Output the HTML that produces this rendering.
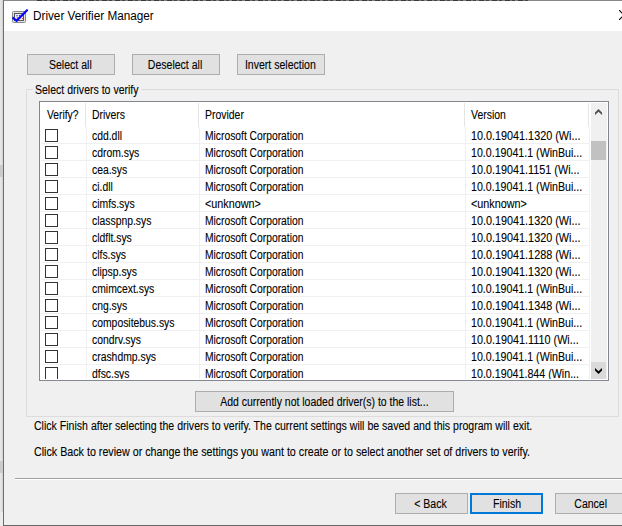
<!DOCTYPE html>
<html><head><meta charset="utf-8">
<style>
html,body{margin:0;padding:0;}
html{overflow:hidden;}
body{width:622px;height:526px;overflow:hidden;background:linear-gradient(to right,#e5e5e5 0,#e5e5e5 1px,#e1e1e1 1px,#e1e1e1 2px,#d6d6d6 2px,#d6d6d6 3px,#f0f0f0 3px);position:relative;font-family:"Liberation Sans",sans-serif;font-size:12px;color:#000;-webkit-text-stroke:0.1px #000;}
.abs{position:absolute;}
#win{left:3px;top:0;width:640px;height:526px;background:#f0f0f0;border-left:1px solid #6c6c6c;border-top:1px solid #888;border-bottom:1px solid #666;box-sizing:border-box;}
#title{left:4px;top:1px;width:640px;height:30px;background:#fff;}
#ttext{left:33.3px;top:8.3px;font-size:12.3px;line-height:16px;white-space:nowrap;-webkit-text-stroke:0;transform:scaleX(.955);transform-origin:0 50%;}
.btn{box-sizing:border-box;border:1px solid #adadad;background:#e1e1e1;height:21px;text-align:center;line-height:20px;white-space:nowrap;}
.btn span{display:inline-block;position:relative;left:-.5px;transform:scaleX(.878);transform-origin:50% 50%;}
.t{white-space:nowrap;line-height:14px;transform:scaleX(.87);transform-origin:0 50%;}
#lv{left:39px;top:101px;width:570px;height:280px;box-sizing:border-box;border:1px solid #828790;background:#fff;overflow:hidden;}
#lvi{position:absolute;left:1px;top:1px;width:566px;height:276px;overflow:hidden;}
.row{position:absolute;left:0;width:549px;height:17px;border-bottom:1px solid #f0f0f0;box-sizing:border-box;}
.row span{position:absolute;top:2.2px;line-height:14px;white-space:nowrap;transform:scaleX(.865);transform-origin:0 50%;}
.c1{left:50.5px} .c2{left:164.3px} .c3{left:430.3px}
.row .c2{transform:scaleX(.858)}
.cb{position:absolute;left:4px;top:2px;width:13px;height:13px;box-sizing:border-box;border:1px solid #333;background:#fff;}
.vs{position:absolute;top:24px;width:1px;height:260px;background:#f0f0f0;}
.hs{position:absolute;top:0;width:1px;height:24px;background:#e5e5e5;}
</style></head><body>
<div class="abs" style="left:0;top:165px;width:3px;height:12px;background:#cbcbcb;"></div>
<div class="abs" style="left:0;top:461px;width:3px;height:12px;background:#cbcbcb;"></div>
<div class="abs" style="left:0;top:512px;width:3px;height:14px;background:#ececec;"></div>
<div id="win" class="abs"></div>
<div class="abs" style="left:37px;top:0;width:491px;height:1px;background:repeating-linear-gradient(to right,#3a3a3a 0,#3a3a3a 5px,#777 5px,#777 7px,#444 7px,#444 10px,#808080 10px,#808080 13px);"></div>
<div id="title" class="abs"></div>
<svg class="abs" style="left:10px;top:7px" width="20" height="18" viewBox="0 0 20 18">
<rect x="2.5" y="4.5" width="13" height="11" rx="1" fill="#e2e2e2" stroke="#8a8a8a" />
<rect x="4.5" y="6.500" width="9" height="7" fill="#ececf0" stroke="#555"/>
<circle cx="7" cy="8.8" r=".7" fill="#22f"/><circle cx="9.5" cy="8.6" r=".7" fill="#22f"/>
<circle cx="7.5" cy="11" r="1" fill="#f66"/><circle cx="12.5" cy="11.5" r=".6" fill="#e22"/>
<path d="M2.900 9.500 L6.500 12.200 L17.100 1.700 L18.300 3.400 L6.700 15.300 L2 11.600 Z" fill="#0505fa"/>
</svg>
<div id="ttext" class="abs">Driver Verifier Manager</div>
<svg class="abs" style="left:619px;top:10px" width="10" height="10" viewBox="0 0 10 10"><path d="M0 0 L10 10 M10 0 L0 10" stroke="#000" stroke-width="1.100" fill="none"/></svg>

<div class="abs btn" style="left:27px;top:54px;width:88px;"><span>Select all</span></div>
<div class="abs btn" style="left:132px;top:54px;width:88px;"><span>Deselect all</span></div>
<div class="abs btn" style="left:237px;top:54px;width:88px;"><span>Invert selection</span></div>

<div class="abs" style="left:26px;top:89px;width:593px;height:328px;box-sizing:border-box;border:1px solid #dcdcdc;"></div>
<div class="abs" style="left:33px;top:83px;width:108px;height:14px;background:#f0f0f0;"></div>
<div class="abs t" style="left:35px;top:83px;transform:scaleX(.877)">Select drivers to verify</div>

<div id="lv" class="abs"><div id="lvi">
<div class="abs t" style="left:6px;top:5px;transform:scaleX(.858)">Verify?</div>
<div class="abs t" style="left:51px;top:5px;">Drivers</div>
<div class="abs t" style="left:163.7px;top:5px;">Provider</div>
<div class="abs t" style="left:430.2px;top:5px;">Version</div>
<div class="hs" style="left:44px;"></div><div class="vs" style="left:45px;"></div>
<div class="hs" style="left:157px;"></div><div class="vs" style="left:158px;"></div>
<div class="hs" style="left:423px;"></div><div class="vs" style="left:424px;"></div>
<div class="hs" style="left:547px;"></div><div class="vs" style="left:548px;"></div>
<div id="rows">
<div class="row" style="top:24px"><i class="cb"></i><span class="c1">cdd.dll</span><span class="c2">Microsoft Corporation</span><span class="c3" style="transform:scaleX(0.901)">10.0.19041.1320 (Wi...</span></div>
<div class="row" style="top:41px"><i class="cb"></i><span class="c1">cdrom.sys</span><span class="c2">Microsoft Corporation</span><span class="c3" style="transform:scaleX(0.887)">10.0.19041.1 (WinBui...</span></div>
<div class="row" style="top:58px"><i class="cb"></i><span class="c1">cea.sys</span><span class="c2">Microsoft Corporation</span><span class="c3" style="transform:scaleX(0.901)">10.0.19041.1151 (Wi...</span></div>
<div class="row" style="top:75px"><i class="cb"></i><span class="c1">ci.dll</span><span class="c2">Microsoft Corporation</span><span class="c3" style="transform:scaleX(0.887)">10.0.19041.1 (WinBui...</span></div>
<div class="row" style="top:92px"><i class="cb"></i><span class="c1">cimfs.sys</span><span class="c2" style="transform:scaleX(.898)">&lt;unknown&gt;</span><span class="c3" style="transform:scaleX(0.898)">&lt;unknown&gt;</span></div>
<div class="row" style="top:109px"><i class="cb"></i><span class="c1">classpnp.sys</span><span class="c2">Microsoft Corporation</span><span class="c3" style="transform:scaleX(0.901)">10.0.19041.1320 (Wi...</span></div>
<div class="row" style="top:126px"><i class="cb"></i><span class="c1">cldflt.sys</span><span class="c2">Microsoft Corporation</span><span class="c3" style="transform:scaleX(0.901)">10.0.19041.1320 (Wi...</span></div>
<div class="row" style="top:143px"><i class="cb"></i><span class="c1">clfs.sys</span><span class="c2">Microsoft Corporation</span><span class="c3" style="transform:scaleX(0.901)">10.0.19041.1288 (Wi...</span></div>
<div class="row" style="top:160px"><i class="cb"></i><span class="c1">clipsp.sys</span><span class="c2">Microsoft Corporation</span><span class="c3" style="transform:scaleX(0.901)">10.0.19041.1320 (Wi...</span></div>
<div class="row" style="top:177px"><i class="cb"></i><span class="c1">cmimcext.sys</span><span class="c2">Microsoft Corporation</span><span class="c3" style="transform:scaleX(0.887)">10.0.19041.1 (WinBui...</span></div>
<div class="row" style="top:194px"><i class="cb"></i><span class="c1">cng.sys</span><span class="c2">Microsoft Corporation</span><span class="c3" style="transform:scaleX(0.901)">10.0.19041.1348 (Wi...</span></div>
<div class="row" style="top:211px"><i class="cb"></i><span class="c1">compositebus.sys</span><span class="c2">Microsoft Corporation</span><span class="c3" style="transform:scaleX(0.887)">10.0.19041.1 (WinBui...</span></div>
<div class="row" style="top:228px"><i class="cb"></i><span class="c1">condrv.sys</span><span class="c2">Microsoft Corporation</span><span class="c3" style="transform:scaleX(0.901)">10.0.19041.1110 (Wi...</span></div>
<div class="row" style="top:245px"><i class="cb"></i><span class="c1">crashdmp.sys</span><span class="c2">Microsoft Corporation</span><span class="c3" style="transform:scaleX(0.887)">10.0.19041.1 (WinBui...</span></div>
<div class="row" style="top:262px"><i class="cb"></i><span class="c1">dfsc.sys</span><span class="c2">Microsoft Corporation</span><span class="c3" style="transform:scaleX(0.89)">10.0.19041.844 (Win...</span></div>
</div>
<div class="abs" style="left:549px;top:0;width:20px;height:276px;background:#fff;"></div>
<div class="abs" style="left:550px;top:0;width:16px;height:276px;background:#f0f0f0;"></div>
<div class="abs" style="left:550px;top:38px;width:15px;height:19px;background:#c1c1c1;"></div>
<div class="abs" style="left:550px;top:259px;width:15px;height:17px;background:#dadada;"></div>
<svg class="abs" style="left:550px;top:0" width="16" height="276" viewBox="0 0 16 276">
<path d="M4 12 L7.500 8.700 L11 12 L11 9.400 L7.500 6 L4 9.400 Z" fill="#505050"/>
<path d="M4 265 L7.500 268.300 L11 265 L11 267.600 L7.500 271 L4 267.600 Z" fill="#000"/>
</svg>
</div></div>

<div class="abs btn" style="left:195px;top:391px;width:259px;"><span style="transform:scaleX(.8726);left:-.5px">Add currently not loaded driver(s) to the list...</span></div>
<div class="abs t" style="left:34.300px;top:419px;transform:scaleX(.8796)">Click Finish after selecting the drivers to verify. The current settings will be saved and this program will exit.</div>
<div class="abs t" style="left:34.300px;top:445px;transform:scaleX(.8921)">Click Back to review or change the settings you want to create or to select another set of drivers to verify.</div>
<div class="abs" style="left:15px;top:478px;width:620px;height:1px;background:#a0a0a0;"></div>
<div class="abs" style="left:15px;top:479px;width:620px;height:1px;background:#fff;"></div>
<div class="abs btn" style="left:395px;top:493px;width:73px;"><span>&lt; Back</span></div>
<div class="abs btn" style="left:470px;top:493px;width:73px;border:2px solid #0078d7;line-height:18px;"><span style="left:.6px">Finish</span></div>
<div class="abs btn" style="left:555px;top:493px;width:73px;"><span>Cancel</span></div>
</body></html>
